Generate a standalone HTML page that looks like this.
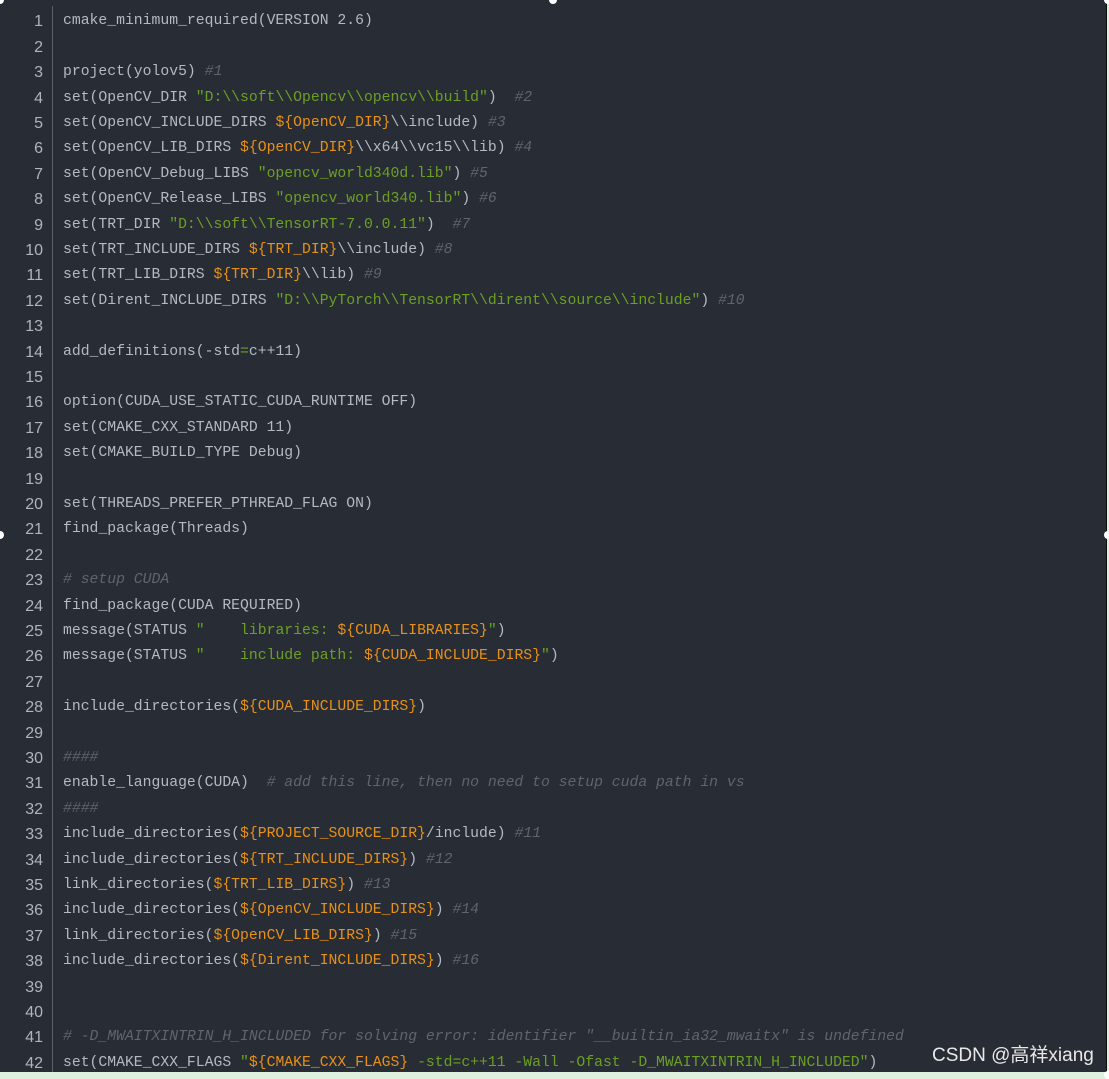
<!DOCTYPE html>
<html><head><meta charset="utf-8">
<style>
html,body{margin:0;padding:0;}
body{width:1109px;height:1075px;background:#dff0df;position:relative;overflow:hidden;}
#box{position:absolute;left:0;top:0;width:1106px;height:1072px;background:#282c34;border-right:1px solid #111;}
#gut{position:absolute;left:52px;top:6px;width:1px;height:1066px;background:#5a5f68;}
.l{position:absolute;left:0;margin-top:2px;height:25.4px;line-height:25.4px;font-family:"Liberation Mono",monospace;font-size:14.75px;white-space:pre;color:#b3bac5;}
.n{position:absolute;width:43px;text-align:right;left:0;font-family:"Liberation Sans",sans-serif;font-size:16px;color:#aeb5bf;}
.c{position:absolute;left:63px;}
.s{color:#6ba025}.v{color:#e89118}.m{color:#5e6570;font-style:italic}
.h{position:absolute;width:8px;height:8px;border-radius:50%;background:#fff;}
#wm{position:absolute;left:932px;top:1040px;font-family:"Liberation Sans","Noto Sans CJK SC",sans-serif;font-size:19px;color:#e8e8e8;}
</style></head><body>
<div id="box"></div><div id="gut"></div>
<div class="l" style="top:7.3px"><span class="n">1</span><span class="c">cmake_minimum_required(VERSION 2.6)</span></div>
<div class="l" style="top:32.7px"><span class="n">2</span></div>
<div class="l" style="top:58.1px"><span class="n">3</span><span class="c">project(yolov5) <span class="m">#1</span></span></div>
<div class="l" style="top:83.5px"><span class="n">4</span><span class="c">set(OpenCV_DIR <span class="s">"D:\\soft\\Opencv\\opencv\\build"</span>)  <span class="m">#2</span></span></div>
<div class="l" style="top:108.9px"><span class="n">5</span><span class="c">set(OpenCV_INCLUDE_DIRS <span class="v">${OpenCV_DIR}</span>\\include) <span class="m">#3</span></span></div>
<div class="l" style="top:134.3px"><span class="n">6</span><span class="c">set(OpenCV_LIB_DIRS <span class="v">${OpenCV_DIR}</span>\\x64\\vc15\\lib) <span class="m">#4</span></span></div>
<div class="l" style="top:159.7px"><span class="n">7</span><span class="c">set(OpenCV_Debug_LIBS <span class="s">"opencv_world340d.lib"</span>) <span class="m">#5</span></span></div>
<div class="l" style="top:185.1px"><span class="n">8</span><span class="c">set(OpenCV_Release_LIBS <span class="s">"opencv_world340.lib"</span>) <span class="m">#6</span></span></div>
<div class="l" style="top:210.5px"><span class="n">9</span><span class="c">set(TRT_DIR <span class="s">"D:\\soft\\TensorRT-7.0.0.11"</span>)  <span class="m">#7</span></span></div>
<div class="l" style="top:235.9px"><span class="n">10</span><span class="c">set(TRT_INCLUDE_DIRS <span class="v">${TRT_DIR}</span>\\include) <span class="m">#8</span></span></div>
<div class="l" style="top:261.3px"><span class="n">11</span><span class="c">set(TRT_LIB_DIRS <span class="v">${TRT_DIR}</span>\\lib) <span class="m">#9</span></span></div>
<div class="l" style="top:286.7px"><span class="n">12</span><span class="c">set(Dirent_INCLUDE_DIRS <span class="s">"D:\\PyTorch\\TensorRT\\dirent\\source\\include"</span>) <span class="m">#10</span></span></div>
<div class="l" style="top:312.1px"><span class="n">13</span></div>
<div class="l" style="top:337.5px"><span class="n">14</span><span class="c">add_definitions(-std<span class="s">=</span>c++11)</span></div>
<div class="l" style="top:362.9px"><span class="n">15</span></div>
<div class="l" style="top:388.3px"><span class="n">16</span><span class="c">option(CUDA_USE_STATIC_CUDA_RUNTIME OFF)</span></div>
<div class="l" style="top:413.7px"><span class="n">17</span><span class="c">set(CMAKE_CXX_STANDARD 11)</span></div>
<div class="l" style="top:439.1px"><span class="n">18</span><span class="c">set(CMAKE_BUILD_TYPE Debug)</span></div>
<div class="l" style="top:464.5px"><span class="n">19</span></div>
<div class="l" style="top:489.9px"><span class="n">20</span><span class="c">set(THREADS_PREFER_PTHREAD_FLAG ON)</span></div>
<div class="l" style="top:515.3px"><span class="n">21</span><span class="c">find_package(Threads)</span></div>
<div class="l" style="top:540.7px"><span class="n">22</span></div>
<div class="l" style="top:566.1px"><span class="n">23</span><span class="c"><span class="m"># setup CUDA</span></span></div>
<div class="l" style="top:591.5px"><span class="n">24</span><span class="c">find_package(CUDA REQUIRED)</span></div>
<div class="l" style="top:616.9px"><span class="n">25</span><span class="c">message(STATUS <span class="s">"    libraries: </span><span class="v">${CUDA_LIBRARIES}</span><span class="s">"</span>)</span></div>
<div class="l" style="top:642.3px"><span class="n">26</span><span class="c">message(STATUS <span class="s">"    include path: </span><span class="v">${CUDA_INCLUDE_DIRS}</span><span class="s">"</span>)</span></div>
<div class="l" style="top:667.7px"><span class="n">27</span></div>
<div class="l" style="top:693.1px"><span class="n">28</span><span class="c">include_directories(<span class="v">${CUDA_INCLUDE_DIRS}</span>)</span></div>
<div class="l" style="top:718.5px"><span class="n">29</span></div>
<div class="l" style="top:743.9px"><span class="n">30</span><span class="c"><span class="m">####</span></span></div>
<div class="l" style="top:769.3px"><span class="n">31</span><span class="c">enable_language(CUDA)  <span class="m"># add this line, then no need to setup cuda path in vs</span></span></div>
<div class="l" style="top:794.7px"><span class="n">32</span><span class="c"><span class="m">####</span></span></div>
<div class="l" style="top:820.1px"><span class="n">33</span><span class="c">include_directories(<span class="v">${PROJECT_SOURCE_DIR}</span>/include) <span class="m">#11</span></span></div>
<div class="l" style="top:845.5px"><span class="n">34</span><span class="c">include_directories(<span class="v">${TRT_INCLUDE_DIRS}</span>) <span class="m">#12</span></span></div>
<div class="l" style="top:870.9px"><span class="n">35</span><span class="c">link_directories(<span class="v">${TRT_LIB_DIRS}</span>) <span class="m">#13</span></span></div>
<div class="l" style="top:896.3px"><span class="n">36</span><span class="c">include_directories(<span class="v">${OpenCV_INCLUDE_DIRS}</span>) <span class="m">#14</span></span></div>
<div class="l" style="top:921.7px"><span class="n">37</span><span class="c">link_directories(<span class="v">${OpenCV_LIB_DIRS}</span>) <span class="m">#15</span></span></div>
<div class="l" style="top:947.1px"><span class="n">38</span><span class="c">include_directories(<span class="v">${Dirent_INCLUDE_DIRS}</span>) <span class="m">#16</span></span></div>
<div class="l" style="top:972.5px"><span class="n">39</span></div>
<div class="l" style="top:997.9px"><span class="n">40</span></div>
<div class="l" style="top:1023.3px"><span class="n">41</span><span class="c"><span class="m"># -D_MWAITXINTRIN_H_INCLUDED for solving error: identifier "__builtin_ia32_mwaitx" is undefined</span></span></div>
<div class="l" style="top:1048.7px"><span class="n">42</span><span class="c">set(CMAKE_CXX_FLAGS <span class="s">"</span><span class="v">${CMAKE_CXX_FLAGS}</span><span class="s"> -std=c++11 -Wall -Ofast -D_MWAITXINTRIN_H_INCLUDED"</span>)</span></div>
<div id="wm">CSDN @高祥xiang</div>
<div class="h" style="left:-4px;top:-4px"></div>
<div class="h" style="left:549px;top:-4px"></div>
<div class="h" style="left:1104px;top:-4px"></div>
<div class="h" style="left:-4px;top:531px"></div>
<div class="h" style="left:1104px;top:531px"></div>
<div class="h" style="left:1104px;top:1071px"></div>
</body></html>
